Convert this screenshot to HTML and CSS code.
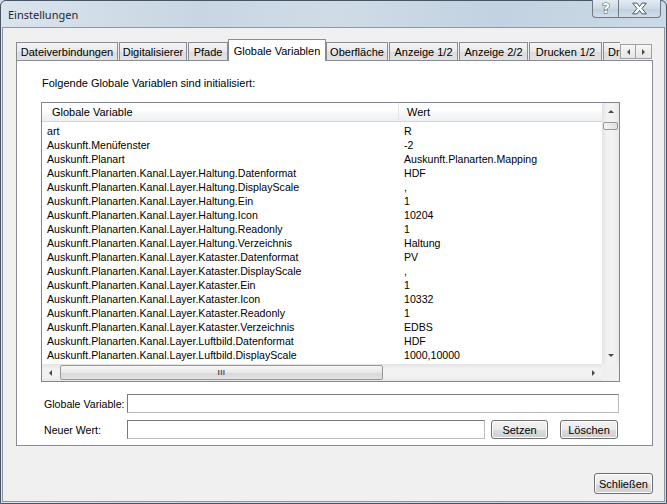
FILE: index.html
```html
<!DOCTYPE html>
<html lang="de">
<head>
    <meta charset="UTF-8">
    <title>Einstellungen</title>
    <link rel="stylesheet" href="styles.css">
</head>
<body>
    <div class="window">
        <!-- Title bar -->
        <div class="titlebar">
            <div class="title">Einstellungen</div>
            <div class="caption-buttons">
                <div class="cap-btn help">
                    <svg width="24" height="17" viewBox="0 0 24 17">
                        <text x="12" y="13" text-anchor="middle" class="glyph">?</text>
                    </svg>
                </div>
                <div class="cap-btn close">
                    <svg width="42" height="17" viewBox="0 0 42 17">
                        <path d="M14 3 L18.5 3 L21 6.5 L23.5 3 L28 3 L23.5 8.5 L28 14 L23.5 14 L21 10.5 L18.5 14 L14 14 L18.5 8.5 Z" fill="#fff" stroke="#4b5563" stroke-width="1" stroke-linejoin="round"/>
                    </svg>
                </div>
            </div>
        </div>

        <div class="client">
            <!-- Tabs -->
            <div class="tabstrip">
                <div class="tab t-datei">Dateiverbindungen</div>
                <div class="tab t-digi">Digitalisierer</div>
                <div class="tab t-pfade">Pfade</div>
                <div class="tab active">Globale Variablen</div>
                <div class="tab t-ober">Oberfläche</div>
                <div class="tab t-anz">Anzeige 1/2</div>
                <div class="tab t-anz">Anzeige 2/2</div>
                <div class="tab t-druck">Drucken 1/2</div>
                <div class="tab cut">Dr</div>
                <div class="tab-arrows">
                    <div class="tab-arrow"><span class="tri-left"></span></div>
                    <div class="tab-arrow"><span class="tri-right"></span></div>
                </div>
            </div>

            <div class="panel">
                <div class="intro">Folgende Globale Variablen sind initialisiert:</div>

                <!-- List view -->
                <div class="listview">
                    <div class="list-body">
                        <div class="list-header">
                            <div class="col-name">Globale Variable</div>
                            <div class="col-value">Wert</div>
                        </div>
                        <div class="list-rows" id="rows"></div>
                    </div>
                    <div class="vscroll">
                        <div class="sb-btn"><span class="tri-up"></span></div>
                        <div class="vtrack">
                            <div class="vthumb"></div>
                        </div>
                        <div class="sb-btn"><span class="tri-down"></span></div>
                    </div>
                    <div class="hscroll">
                        <div class="sb-btn"><span class="tri-left"></span></div>
                        <div class="htrack">
                            <div class="hthumb"><span class="grip">III</span></div>
                        </div>
                        <div class="sb-btn"><span class="tri-right"></span></div>
                    </div>
                    <div class="sb-corner"></div>
                </div>

                <!-- Edit fields -->
                <div class="form-row">
                    <label class="form-label">Globale Variable:</label>
                    <input type="text" class="textbox wide">
                </div>
                <div class="form-row">
                    <label class="form-label">Neuer Wert:</label>
                    <input type="text" class="textbox">
                    <button class="button setzen">Setzen</button>
                    <button class="button loeschen">Löschen</button>
                </div>
            </div>

            <div class="footer">
                <button class="button close-btn">Schließen</button>
            </div>
        </div>
    </div>

    <script>
        const variables = [
            ['art', 'R'],
            ['Auskunft.Menüfenster', '-2'],
            ['Auskunft.Planart', 'Auskunft.Planarten.Mapping'],
            ['Auskunft.Planarten.Kanal.Layer.Haltung.Datenformat', 'HDF'],
            ['Auskunft.Planarten.Kanal.Layer.Haltung.DisplayScale', ','],
            ['Auskunft.Planarten.Kanal.Layer.Haltung.Ein', '1'],
            ['Auskunft.Planarten.Kanal.Layer.Haltung.Icon', '10204'],
            ['Auskunft.Planarten.Kanal.Layer.Haltung.Readonly', '1'],
            ['Auskunft.Planarten.Kanal.Layer.Haltung.Verzeichnis', 'Haltung'],
            ['Auskunft.Planarten.Kanal.Layer.Kataster.Datenformat', 'PV'],
            ['Auskunft.Planarten.Kanal.Layer.Kataster.DisplayScale', ','],
            ['Auskunft.Planarten.Kanal.Layer.Kataster.Ein', '1'],
            ['Auskunft.Planarten.Kanal.Layer.Kataster.Icon', '10332'],
            ['Auskunft.Planarten.Kanal.Layer.Kataster.Readonly', '1'],
            ['Auskunft.Planarten.Kanal.Layer.Kataster.Verzeichnis', 'EDBS'],
            ['Auskunft.Planarten.Kanal.Layer.Luftbild.Datenformat', 'HDF'],
            ['Auskunft.Planarten.Kanal.Layer.Luftbild.DisplayScale', '1000,10000']
        ];

        const rows = document.getElementById('rows');
        variables.forEach(function(v) {
            const row = document.createElement('div');
            row.className = 'list-row';
            row.innerHTML = '<div class="cell-name"></div><div class="cell-value"></div>';
            row.children[0].textContent = v[0];
            row.children[1].textContent = v[1];
            rows.appendChild(row);
        });
    </script>
</body>
</html>
```

FILE: styles.css
```css
* {
    box-sizing: border-box;
}
html, body {
    margin: 0;
    padding: 0;
}
body {
    width: 667px;
    height: 504px;
    overflow: hidden;
    font-family: "Liberation Sans", Arial, sans-serif;
    font-size: 11px;
    color: #000;
    background: #cfdbe7;
}
.window {
    width: 667px;
    height: 504px;
    display: flex;
    flex-direction: column;
    border: 1px solid #4a5563;
    border-radius: 6px 6px 0 0;
    background: linear-gradient(90deg, #d9e4ee 0%, #c8d6e3 30%, #cfdce8 50%, #c2d2e0 75%, #cbdae6 100%);
    padding: 0 1px 1px 1px;
}
/* Title bar */
.titlebar {
    height: 26px;
    display: flex;
    align-items: flex-start;
    flex-shrink: 0;
}
.title {
    font-family: "Noto Sans", "DejaVu Sans", sans-serif;
    font-size: 11px;
    color: #1e2933;
    padding: 6px 0 0 6px;
}
.caption-buttons {
    margin-left: auto;
    margin-right: 4px;
    display: flex;
    margin-top: -1px;
}
.cap-btn {
    height: 18px;
    border: 1px solid #6b7988;
    border-top: none;
    background: linear-gradient(#e4ecf4, #cdd9e5 50%, #c0cfdd 51%, #d3dfea);
    display: flex;
    align-items: center;
    justify-content: center;
}
.cap-btn.help {
    width: 26px;
    border-radius: 0 0 0 4px;
    border-right: none;
}
.cap-btn.close {
    width: 43px;
    border-radius: 0 0 4px 0;
}
.glyph {
    font-family: "DejaVu Sans", sans-serif;
    font-weight: bold;
    font-size: 14px;
    fill: #fff;
    stroke: #4b5563;
    stroke-width: 1;
    paint-order: stroke;
}
/* Client area */
.client {
    flex: 1;
    background: #f0f0f0;
    border: 1px solid #8a99a8;
    display: flex;
    flex-direction: column;
    padding: 0 11px 0 13px;
}
.tabstrip {
    display: flex;
    align-items: flex-end;
    margin-top: 11px;
    height: 21px;
    position: relative;
    z-index: 1;
}
.tab {
    height: 18px;
    border: 1px solid #898c95;
    border-bottom: none;
    margin-right: 1px;
    background: linear-gradient(#f4f4f4, #e9e9e9 50%, #dcdcdc 51%, #e3e3e3);
    display: flex;
    align-items: center;
    justify-content: center;
    white-space: nowrap;
    font-size: 11px;
    flex-shrink: 0;
}
.t-datei { width: 102px; }
.t-digi { width: 68px; }
.t-pfade { width: 40px; margin-right: 0; }
.t-ober { width: 62px; }
.t-anz { width: 69px; }
.t-druck { width: 73px; }
.tab.active {
    width: 98px;
    height: 22px;
    background: #fff;
    margin-right: 0;
    position: relative;
    top: 1px;
}
.tab.cut {
    width: 17px;
    overflow: hidden;
    justify-content: flex-start;
    padding-left: 4px;
    border-right: none;
    margin-right: 0;
}
.tab-arrows {
    display: flex;
    align-self: flex-start;
    margin-top: 5px;
}
.tab-arrow {
    width: 16px;
    height: 15px;
    border: 1px solid #a0a0a0;
    background: linear-gradient(#f6f6f6, #e6e6e6);
    display: flex;
    align-items: center;
    justify-content: center;
}
.tab-arrow + .tab-arrow {
    border-left: none;
}
/* Arrow triangles */
.tri-left, .tri-right, .tri-up, .tri-down {
    width: 0;
    height: 0;
    border: 3px solid transparent;
}
.tri-left {
    border-right: 3px solid #4a4a4a;
    border-left: none;
}
.tri-right {
    border-left: 3px solid #4a4a4a;
    border-right: none;
}
.tri-up {
    border-bottom: 3px solid #4a4a4a;
    border-top: none;
}
.tri-down {
    border-top: 3px solid #4a4a4a;
    border-bottom: none;
}
/* Tab panel */
.panel {
    width: 637px;
    height: 386px;
    background: #fff;
    border: 1px solid #898c95;
    padding: 0 0 0 24px;
    display: flex;
    flex-direction: column;
}
.intro {
    margin: 16px 0 0 1px;
    height: 13px;
}
.listview {
    margin-top: 12px;
    width: 579px;
    height: 280px;
    border: 1px solid #828790;
    display: grid;
    grid-template-columns: 1fr 17px;
    grid-template-rows: 1fr 17px;
}
.list-body {
    overflow: hidden;
}
.list-header {
    display: flex;
    height: 19px;
    align-items: center;
    background: linear-gradient(#fff, #fff 40%, #f5f6f7 60%, #eef0f2);
    border-bottom: 1px solid #d5d5d5;
    font-size: 11px;
}
.col-name {
    width: 357px;
    padding-left: 10px;
    height: 100%;
    display: flex;
    align-items: center;
    border-right: 1px solid #e3e5e8;
}
.col-value {
    padding-left: 8px;
}
.list-rows {
    padding-top: 2px;
}
.list-row {
    display: flex;
    height: 14px;
    line-height: 14px;
    white-space: nowrap;
    font-size: 10.6px;
}
.cell-name {
    width: 357px;
    padding-left: 5px;
}
.cell-value {
    padding-left: 5px;
}
/* Scrollbars */
.vscroll {
    display: flex;
    flex-direction: column;
    background: linear-gradient(90deg, #e3e3e3, #f2f2f2 30%, #f2f2f2 70%, #e8e8e8);
}
.hscroll {
    display: flex;
    background: linear-gradient(#e3e3e3, #f2f2f2 30%, #f2f2f2 70%, #e8e8e8);
}
.sb-btn {
    width: 17px;
    height: 17px;
    display: flex;
    align-items: center;
    justify-content: center;
    flex-shrink: 0;
}
.vtrack {
    flex: 1;
    padding: 2px 1px 0 1px;
}
.vthumb {
    height: 8px;
    border: 1px solid #979797;
    border-radius: 2px;
    background: linear-gradient(90deg, #f5f5f5, #e0e0e0);
}
.htrack {
    flex: 1;
    padding: 1px 0 1px 1px;
}
.hthumb {
    width: 323px;
    height: 15px;
    border: 1px solid #979797;
    border-radius: 2px;
    background: linear-gradient(#f6f6f6, #e8e8e8 50%, #d8d8d8 51%, #e2e2e2);
    display: flex;
    align-items: center;
    justify-content: center;
}
.grip {
    font-size: 8px;
    font-weight: bold;
    color: #555;
    letter-spacing: 0.5px;
}
.sb-corner {
    background: #f0f0f0;
}
/* Form */
.form-row {
    display: flex;
    align-items: center;
    height: 19px;
    margin-top: 12px;
}
.form-row + .form-row {
    margin-top: 7px;
}
.form-label {
    width: 86px;
    padding-left: 3px;
    font-size: 10.6px;
    white-space: nowrap;
}
.textbox {
    width: 358px;
    height: 19px;
    border: 1px solid #7a7a7a;
    border-right-color: #bcbcbc;
    border-bottom-color: #bcbcbc;
    background: #fff;
    padding: 0 3px;
    font-family: inherit;
    font-size: 11px;
    outline: none;
}
.textbox.wide {
    width: 492px;
}
.button {
    height: 19px;
    border: 1px solid #707070;
    border-radius: 3px;
    background: linear-gradient(#f2f2f2, #ebebeb 50%, #dddddd 51%, #cfcfcf);
    font-family: inherit;
    font-size: 11px;
    color: #000;
    padding: 0;
    box-shadow: inset 0 0 0 1px #fcfcfc;
}
.setzen {
    width: 57px;
    margin-left: 6px;
}
.loeschen {
    width: 58px;
    margin-left: 12px;
}
/* Footer */
.footer {
    display: flex;
    justify-content: flex-end;
    padding: 27px 0 0 0;
}
.close-btn {
    width: 59px;
    height: 21px;
    margin-right: 0;
}
```
